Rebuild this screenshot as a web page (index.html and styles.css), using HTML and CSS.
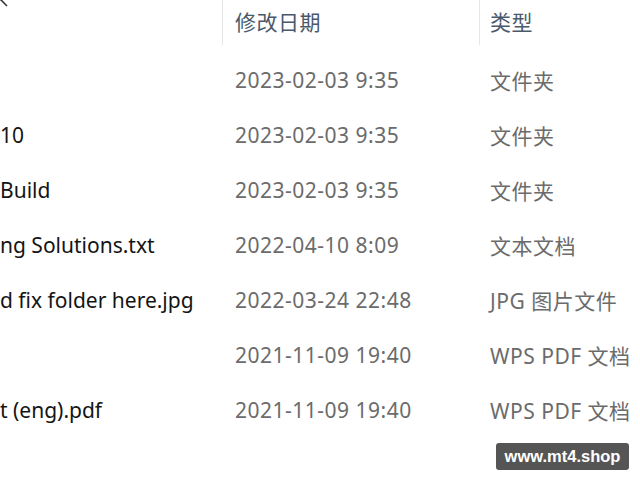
FILE: index.html
```html
<!DOCTYPE html>
<html lang="zh-CN">
<head>
<meta charset="utf-8">
<link rel="stylesheet" href="styles.css">
</head>
<body>
<div class="list">
  <div class="header">
    <div class="hcell name-h">
      <svg class="sort" width="12" height="10" viewBox="0 0 12 10"><path d="M-3 -4 L1.5 0.5 L7 6" fill="none" stroke="#333" stroke-width="1.6"/></svg>
    </div>
    <div class="hcell sep">修改日期</div>
    <div class="hcell sep">类型</div>
  </div>
  <div class="row"><div class="name"></div><div class="date">2023-02-03 9:35</div><div class="type">文件夹</div></div>
  <div class="row"><div class="name n2">10</div><div class="date">2023-02-03 9:35</div><div class="type">文件夹</div></div>
  <div class="row"><div class="name n3">Build</div><div class="date">2023-02-03 9:35</div><div class="type">文件夹</div></div>
  <div class="row"><div class="name n4">ng Solutions.txt</div><div class="date">2022-04-10 8:09</div><div class="type">文本文档</div></div>
  <div class="row"><div class="name n5">d fix folder here.jpg</div><div class="date">2022-03-24 22:48</div><div class="type">JPG 图片文件</div></div>
  <div class="row"><div class="name"></div><div class="date">2021-11-09 19:40</div><div class="type">WPS PDF 文档</div></div>
  <div class="row"><div class="name n7">t (eng).pdf</div><div class="date">2021-11-09 19:40</div><div class="type">WPS PDF 文档</div></div>
</div>
<div class="watermark">www.mt4.shop</div>
</body>
</html>
```
FILE: styles.css
```css
html, body {
  margin: 0;
  padding: 0;
  background: #ffffff;
  width: 640px;
  height: 480px;
  overflow: hidden;
  position: relative;
}
body {
  font-family: "Noto Sans", "Noto Sans CJK SC", sans-serif;
  font-size: 21px;
}
.list {
  display: flex;
  flex-direction: column;
  width: 640px;
}
.header, .row {
  display: grid;
  grid-template-columns: 222px 257px 1fr;
  white-space: nowrap;
}
.header {
  height: 52px;
}
.hcell {
  position: relative;
  color: #4a5a6d;
  line-height: 45px;
  height: 45px;
  letter-spacing: 0.5px;
}
.hcell.sep {
  border-left: 1px solid #e6e6e6;
  padding-left: 12px;
}
.hcell.sep:last-child {
  padding-left: 10px;
}
.sort {
  position: absolute;
  left: 0;
  top: 0;
}
.row {
  height: 55px;
  align-items: center;
}
.name {
  color: #141414;
  overflow: hidden;
}
.date {
  color: #6b6b6b;
  padding-left: 13px;
  letter-spacing: 0.5px;
}
.type {
  color: #6b6b6b;
  padding-left: 11px;
  letter-spacing: 0.5px;
}
.watermark {
  position: absolute;
  left: 496px;
  top: 443px;
  width: 133px;
  height: 27px;
  background: #555555;
  border-radius: 3px;
  color: #ffffff;
  font-family: "Liberation Sans", Arial, sans-serif;
  font-weight: bold;
  font-size: 16.5px;
  line-height: 27px;
  text-align: center;
}
```
